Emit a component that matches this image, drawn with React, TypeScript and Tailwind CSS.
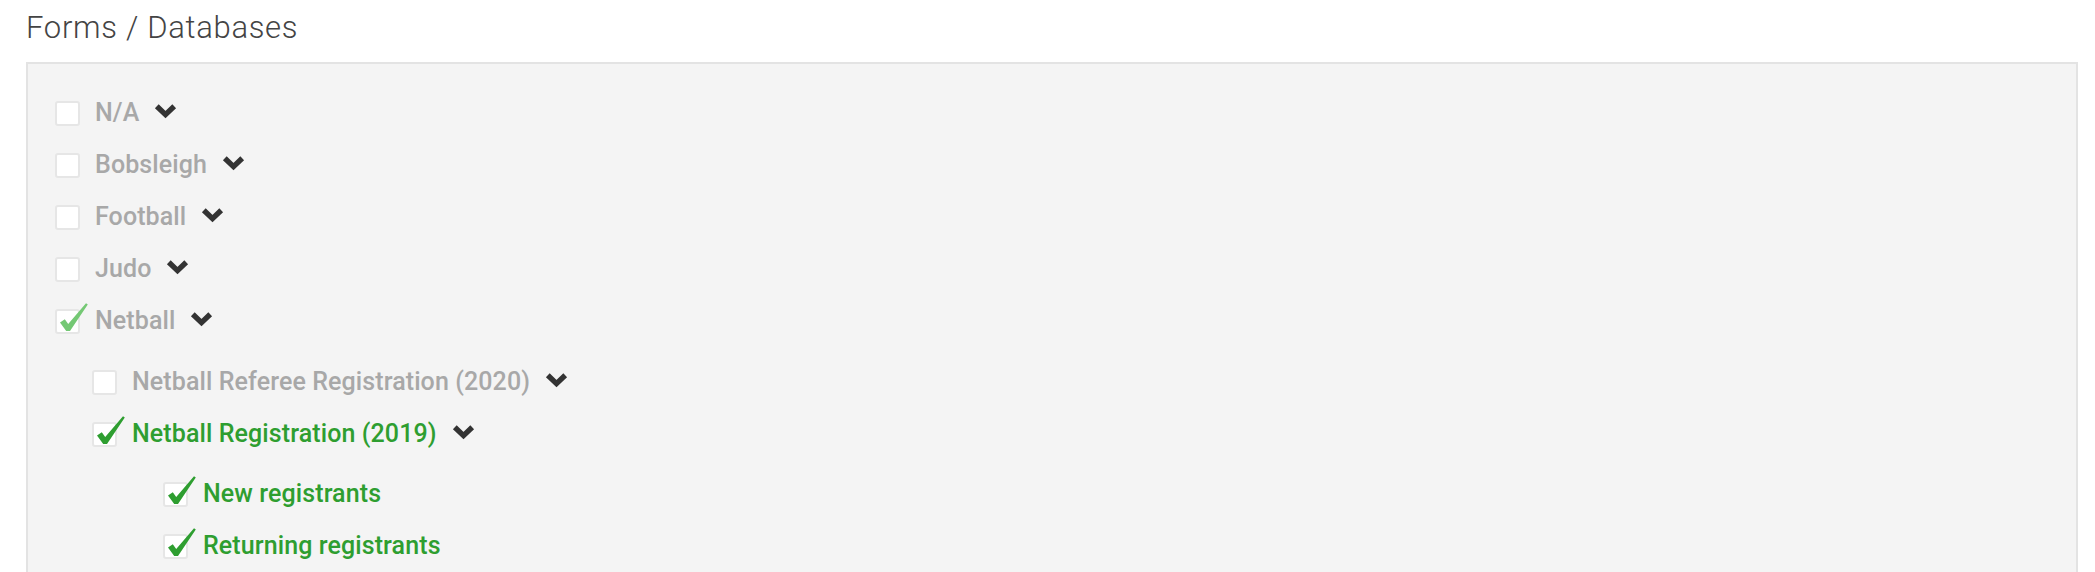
import React from 'react';

type Node = {
  label: string;
  checked?: boolean;
  partial?: boolean;
  chevron?: boolean;
  children?: Node[];
};

const tree: Node[] = [
  { label: 'N/A', chevron: true },
  { label: 'Bobsleigh', chevron: true },
  { label: 'Football', chevron: true },
  { label: 'Judo', chevron: true },
  {
    label: 'Netball',
    partial: true,
    chevron: true,
    children: [
      { label: 'Netball Referee Registration (2020)', chevron: true },
      {
        label: 'Netball Registration (2019)',
        checked: true,
        chevron: true,
        children: [
          { label: 'New registrants', checked: true },
          { label: 'Returning registrants', checked: true },
        ],
      },
    ],
  },
];

const Chevron = () => (
  <svg width="23" height="16" viewBox="0 0 23 16" className="shrink-0 -mt-[4px]">
    <path d="M2.8 3.2 L11.5 11.6 L20.2 3.2" fill="none" stroke="#333333" strokeWidth="5.4" strokeLinejoin="miter" />
  </svg>
);

const Checkbox = ({ checked, partial }: { checked?: boolean; partial?: boolean }) => (
  <span className="relative shrink-0 w-[25px] h-[25px] bg-white border-2 border-[#e6e6e6] rounded-[3px]">
    {(checked || partial) && (
      <svg width="25" height="25" viewBox="0 0 25 25" className="absolute -left-[2px] -top-[2px] overflow-visible">
        <path
          d="M5 13.5 L9.8 10.2 L13.2 15 L31 -5.8 L32.8 -4.6 L15 22 L11.2 22 Z"
          fill={checked ? '#2e9e30' : '#74c874'}
        />
      </svg>
    )}
  </span>
);

const Row = ({ node, level }: { node: Node; level: number }) => (
  <li>
    <div className={`flex items-center h-[52px] ${level === 2 ? 'pl-[71px]' : ''}`}>
      <Checkbox checked={node.checked} partial={node.partial} />
      <span
        className={`ml-[15px] text-[25px] tracking-[0.1px] font-medium ${node.checked ? 'text-[#2e9e30]' : 'text-[#a8a8a8]'}`}
      >
        {node.label}
      </span>
      {node.chevron && (
        <span className="ml-[15px] flex">
          <Chevron />
        </span>
      )}
    </div>
    {node.children && (
      <ul className={level === 0 ? 'mt-[9px] pl-[37px]' : 'mt-[8px]'}>
        {node.children.map((c) => (
          <Row key={c.label} node={c} level={level + 1} />
        ))}
      </ul>
    )}
  </li>
);

export default function App() {
  return (
    <div
      className="min-h-[572px] bg-white pl-[26px] pr-[17px] pt-[9px]"
      style={{ fontFamily: 'Roboto, "Noto Sans", sans-serif' }}
    >
      <h2 className="text-[31px] leading-[37px] tracking-[0.7px] font-light text-[#444444]">Forms / Databases</h2>
      <div className="mt-[16px] border-2 border-[#e3e3e3] bg-[#f4f4f4] pl-[27px] pt-[23px] pb-[20px]">
        <ul>
          {tree.map((n) => (
            <Row key={n.label} node={n} level={0} />
          ))}
        </ul>
      </div>
    </div>
  );
}
